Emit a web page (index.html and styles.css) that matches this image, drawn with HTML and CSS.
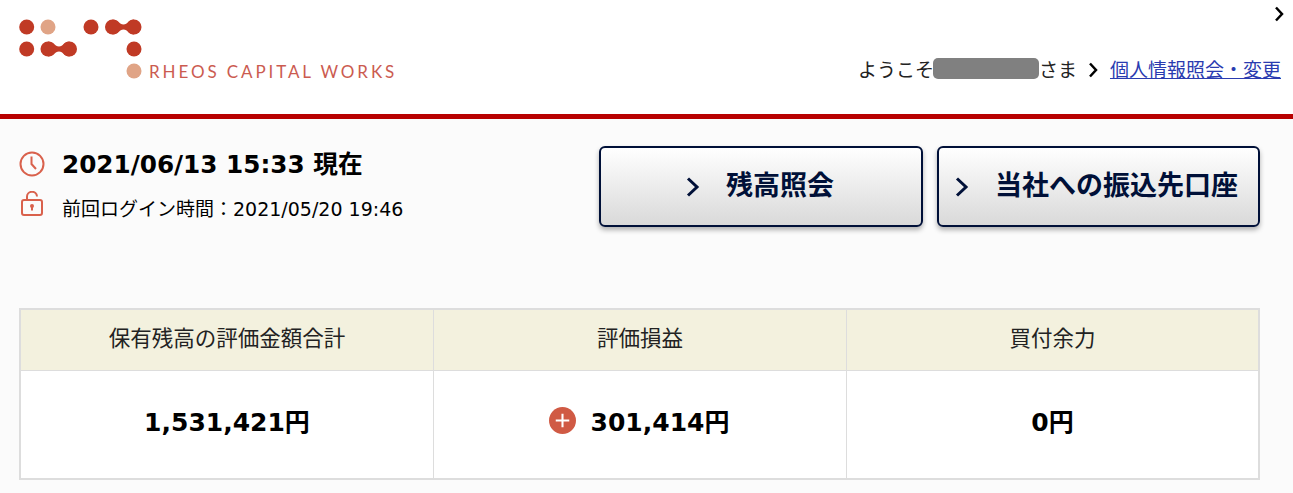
FILE: index.html
```html
<!DOCTYPE html>
<html lang="ja">
<head>
    <meta charset="UTF-8">
    <meta name="viewport" content="width=device-width, initial-scale=1.0">
    <title>残高照会</title>
    <link rel="stylesheet" href="styles.css">
</head>
<body>
    <header class="site-header">
        <div class="logo">
            <svg class="logo-mark" width="125" height="62" viewBox="0 0 125 62">
                <g fill="#c03a25">
                    <circle cx="7.700" cy="8" r="7.500"/>
                    <circle cx="72" cy="8" r="7.500"/>
                    <circle cx="7.700" cy="30" r="7.500"/>
                    <circle cx="115" cy="30" r="7.500"/>
                    <g id="pill">
                        <circle cx="93.500" cy="8" r="7.500"/>
                        <circle cx="115" cy="8" r="7.500"/>
                        <path d="M93.500 .5C100 .5 100 5.500 104.500 5.500 109 5.500 109 .5 115 .5V15.500C109 15.500 109 10.500 104.500 10.500 100 10.500 100 15.500 93.500 15.500Z"/>
                    </g>
                    <use href="#pill" transform="translate(-64.500 22)"/>
                </g>
                <circle cx="29" cy="8" r="7.500" fill="#e0a486"/>
                <circle cx="115" cy="52" r="7.500" fill="#e0a486"/>
            </svg>
            <span class="logo-text">RHEOS CAPITAL WORKS</span>
        </div>
        <div class="header-right">
            <svg class="chevron chevron-top" width="10" height="16" viewBox="0 0 10 16"><path d="M2 1.500 8 8 2 14.500"/></svg>
            <div class="user-line">
                <span>ようこそ</span><span class="masked"></span><span>さま</span>
                <svg class="chevron chevron-user" width="10" height="16" viewBox="0 0 10 16"><path d="M2 1.500 8 8 2 14.500"/></svg>
                <a href="#" class="user-link">個人情報照会・変更</a>
            </div>
        </div>
    </header>

    <main class="content">
        <div class="summary">
            <div class="times">
                <div class="time-row">
                    <svg class="time-icon" width="26" height="26" viewBox="0 0 26 26">
                        <circle cx="13" cy="13" r="11.500"/>
                        <path d="M12.500 5.500V13l4.500 5"/>
                    </svg>
                    <span class="now">2021/06/13 15:33 現在</span>
                </div>
                <div class="time-row last-login">
                    <svg class="time-icon lock-icon" width="26" height="26" viewBox="0 0 26 26">
                        <path d="M8 9V6a5 5 0 0 1 10-.5"/>
                        <rect x="3" y="9" width="20" height="15" rx="2"/>
                        <circle class="keyhole" cx="13" cy="15" r="2"/>
                        <path d="M13 15v4.500"/>
                    </svg>
                    <span class="login-text">前回ログイン時間：2021/05/20 19:46</span>
                </div>
            </div>
            <div class="actions">
                <a href="#" class="action-btn btn-balance">
                    <svg class="btn-chevron" width="14" height="22" viewBox="0 0 14 22"><path d="M2 2.500 11 11 2 19.500"/></svg>
                    <span>残高照会</span>
                </a>
                <a href="#" class="action-btn btn-account">
                    <svg class="btn-chevron" width="14" height="22" viewBox="0 0 14 22"><path d="M2 2.500 11 11 2 19.500"/></svg>
                    <span>当社への振込先口座</span>
                </a>
            </div>
        </div>

        <div class="balance-table">
            <div class="cell head">保有残高の評価金額合計</div>
            <div class="cell head">評価損益</div>
            <div class="cell head">買付余力</div>
            <div class="cell value">1,531,421円</div>
            <div class="cell value value-plus">
                <svg class="plus" width="27" height="27" viewBox="0 0 26 26">
                    <circle cx="13" cy="13" r="13" fill="#d05a44"/>
                    <path d="M13 6.500v13M6.500 13h13" stroke="#fff" stroke-width="2"/>
                </svg>
                <span>301,414円</span>
            </div>
            <div class="cell value">0円</div>
        </div>
    </main>
</body>
</html>
```

FILE: styles.css
```css
* {
    box-sizing: border-box;
}

body {
    margin: 0;
    background: #fbfbfb;
    color: #000;
    font-family: "DejaVu Sans", "Noto Sans CJK JP", sans-serif;
    overflow: hidden;
}

.site-header {
    height: 119px;
    background: #fff;
    border-bottom: 5px solid #b80000;
    display: flex;
    justify-content: space-between;
    padding: 0 12px 0 19px;
}

.logo {
    display: flex;
    align-items: flex-end;
    padding: 19px 0 33px;
}

.logo-mark {
    display: block;
    flex: none;
}

.logo-text {
    margin-left: 5px;
    margin-bottom: 1px;
    color: #cb5b50;
    font-family: "Lato", sans-serif;
    font-size: 17px;
    line-height: 17px;
    letter-spacing: 2.900px;
    white-space: nowrap;
}

.header-right {
    display: flex;
    flex-direction: column;
    align-items: flex-end;
    padding-top: 6px;
}

.chevron {
    display: block;
    flex: none;
    fill: none;
    stroke: #000;
    stroke-width: 2.500;
}

.chevron-top {
    margin-right: -3px;
}

.user-line {
    display: flex;
    align-items: center;
    margin-top: 35px;
    font-family: "Noto Sans CJK JP", sans-serif;
    font-size: 19px;
    line-height: 24px;
    color: #222;
}

.masked {
    display: block;
    width: 106px;
    height: 21px;
    margin: 0 0 2px -1px;
    background: #808080;
    border-radius: 5px;
}

.chevron-user {
    margin: 1px 12px 0 11px;
}

.user-link {
    color: #2a3bb0;
    text-decoration: underline;
}

.content {
    padding: 0 33px 0 19px;
}

.summary {
    display: flex;
    justify-content: space-between;
    padding-top: 27px;
    height: 189px;
}

.time-row {
    display: flex;
    align-items: center;
    height: 36px;
}

.last-login {
    margin-top: 9px;
}

.time-icon {
    flex: none;
    fill: none;
    stroke: #d9614c;
    stroke-width: 2;
}

.time-icon .keyhole {
    fill: #d9614c;
    stroke: none;
}

.lock-icon {
    margin-top: -10px;
}

.now {
    margin-left: 17px;
    padding-bottom: 4px;
    font-size: 24.700px;
    font-weight: 700;
    white-space: nowrap;
}

.login-text {
    margin-left: 17px;
    padding-bottom: 4px;
    font-size: 19px;
    white-space: nowrap;
}

.actions {
    display: flex;
    gap: 14px;
}

.action-btn {
    display: flex;
    align-items: center;
    width: 324px;
    height: 81px;
    border: 2px solid #001038;
    border-radius: 6px;
    background: linear-gradient(to bottom, #fff, #d9d9d9);
    box-shadow: 0 3px 5px rgba(0, 0, 0, 0.3);
    color: #001038;
    font-family: "Noto Sans CJK JP", sans-serif;
    font-size: 27px;
    font-weight: 700;
    text-decoration: none;
}

.action-btn span {
    padding-bottom: 7px;
}

.btn-balance {
    padding-left: 85px;
    gap: 26px;
}

.btn-account {
    width: 323px;
    padding-left: 16px;
    gap: 26px;
}

.btn-chevron {
    flex: none;
    fill: none;
    stroke: #001038;
    stroke-width: 3;
}

.balance-table {
    display: grid;
    grid-template-columns: 412px 413px 1fr;
    grid-template-rows: 61px 107px;
    width: 1241px;
    border: 2px solid #ddd;
    background: #fff;
}

.cell {
    display: flex;
    align-items: center;
    justify-content: center;
    border-left: 1px solid #ddd;
}

.cell:nth-child(3n + 1) {
    border-left: 0;
}

.head {
    padding-bottom: 8px;
    background: #f3f1de;
    border-bottom: 1px solid #ddd;
    color: #222;
    font-family: "Noto Sans CJK JP", sans-serif;
    font-size: 21.500px;
    font-weight: 400;
}

.value {
    padding-bottom: 10px;
    font-size: 25px;
    font-weight: 700;
}

.value-plus {
    padding-right: 2px;
}

.plus {
    margin-right: 15px;
    margin-top: 1px;
}
```
